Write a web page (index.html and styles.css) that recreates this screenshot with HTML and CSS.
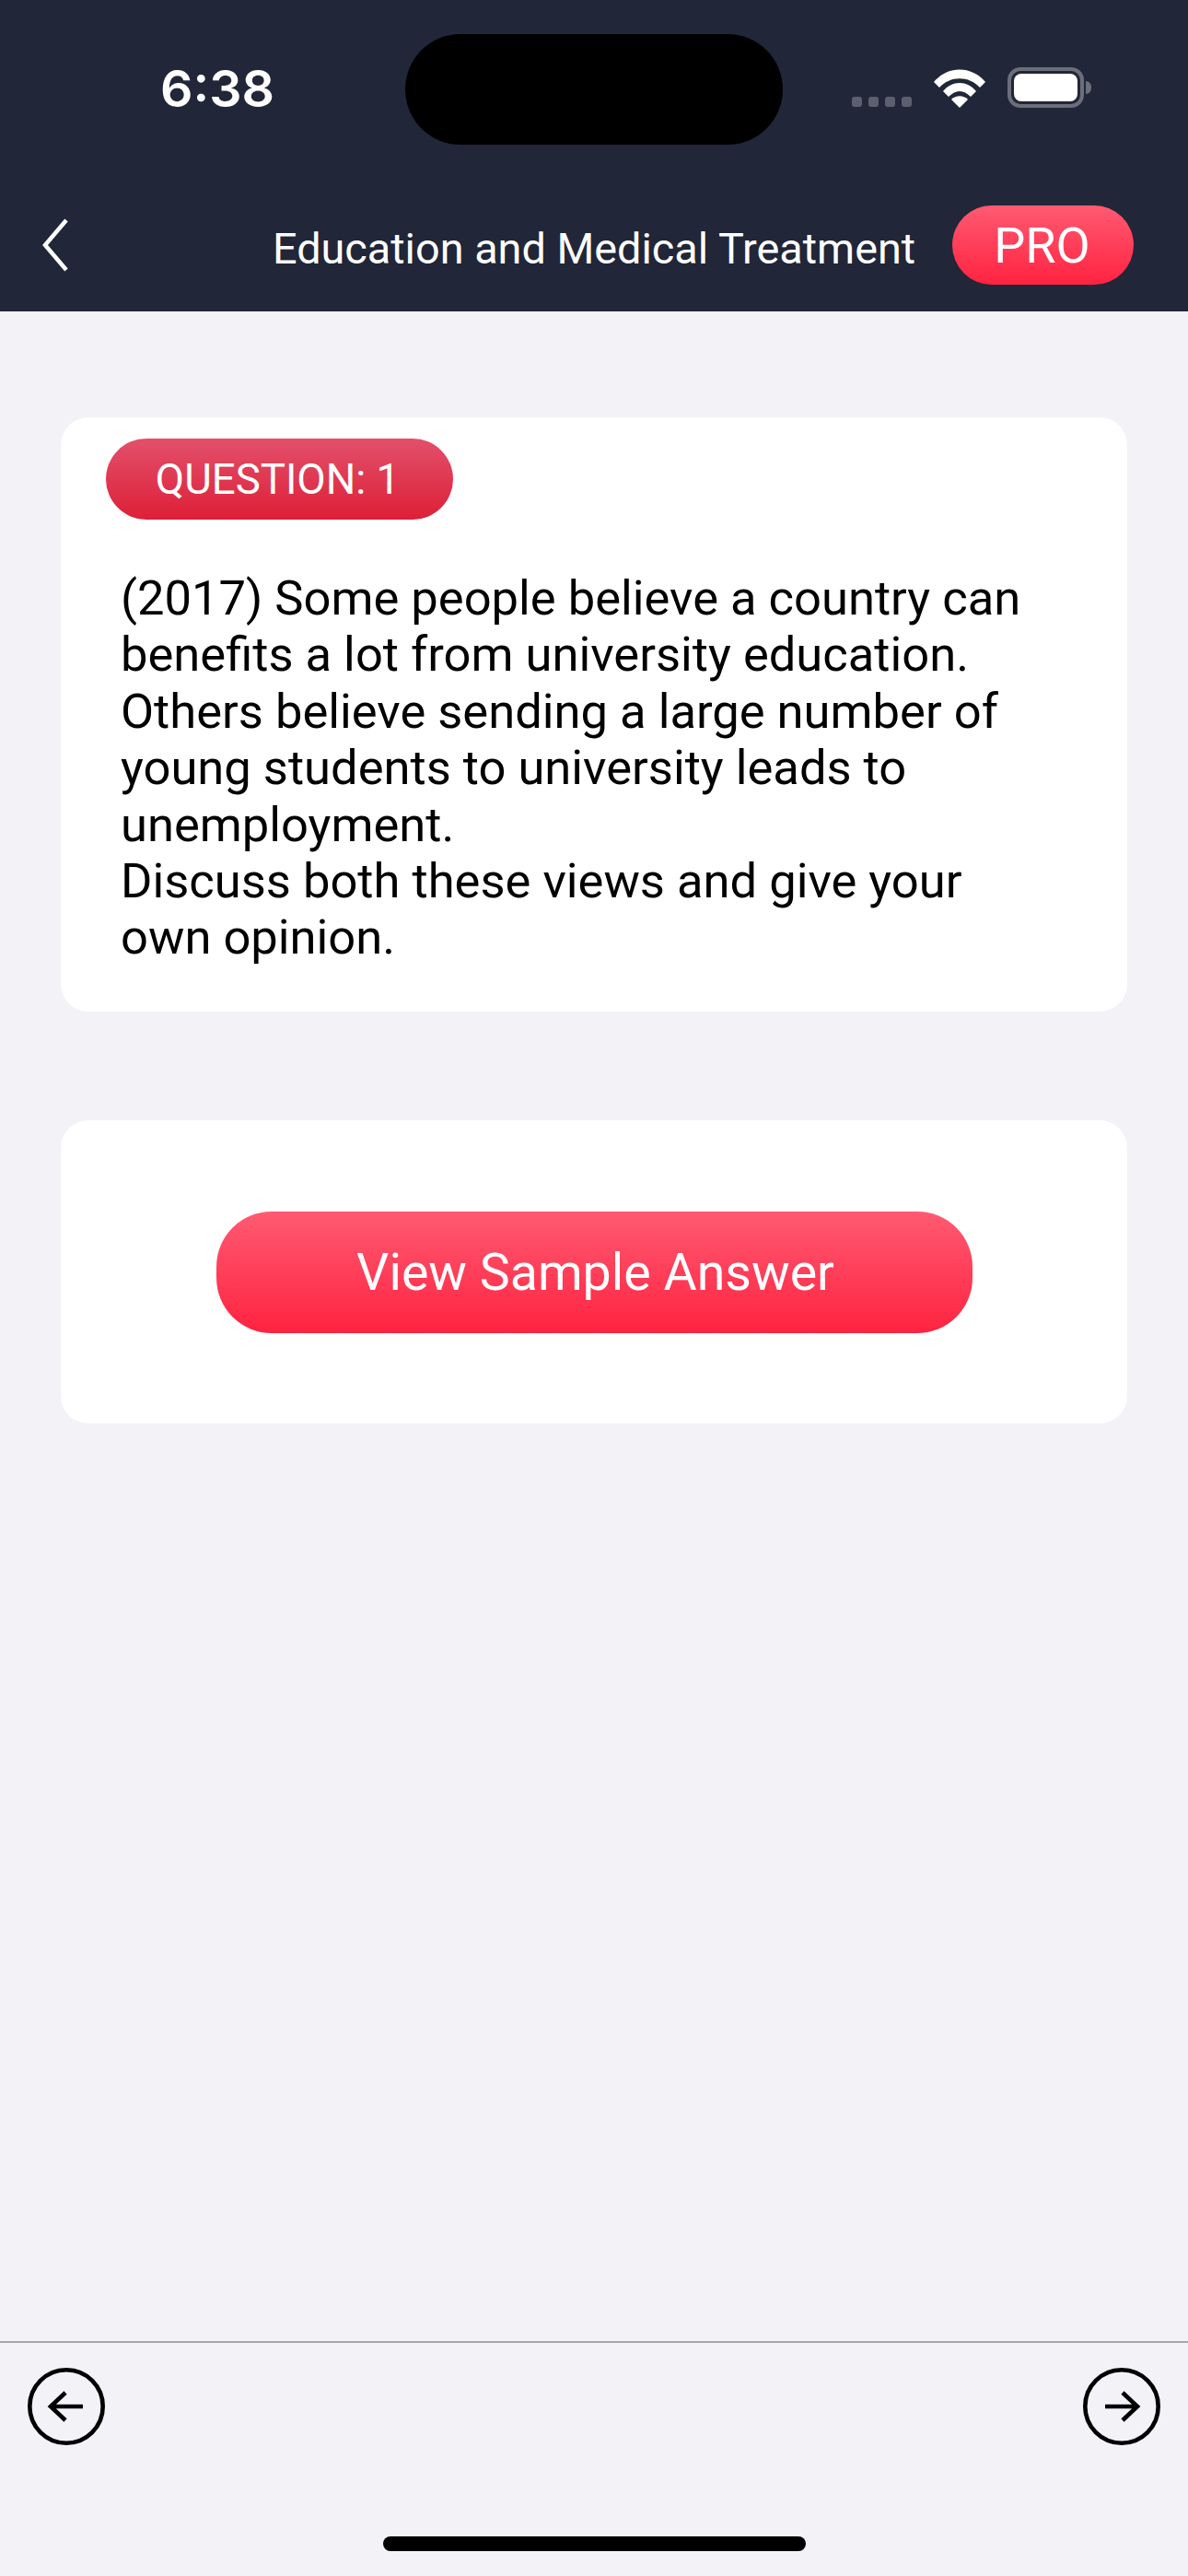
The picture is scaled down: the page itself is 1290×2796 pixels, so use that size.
FILE: index.html

```html
<!DOCTYPE html>
<html>

<head>
    <title>Education and Medical Treatment</title>
    <link rel="stylesheet" href="styles.css">
</head>

<body>
    <header class="top">
        <div class="status">
            <span class="time">6:38</span>
            <div class="island"></div>
            <div class="status-icons">
                <div class="dots"><i></i><i></i><i></i><i></i></div>
                <svg class="wifi" width="56" height="42" viewBox="0 0 56 42">
                    <path d="M0 14 C15 -4 41 -4 56 14 L50 20 C38 7 18 7 6 20 Z" fill="#fff"/>
                    <path d="M10 24 C20 12 36 12 46 24 L40 30 C32 22 24 22 16 30 Z" fill="#fff"/>
                    <path d="M19 33 C24 28 32 28 37 33 L28 42 Z" fill="#fff"/>
                </svg>
                <div class="battery"><div class="battery-fill"></div></div>
                <div class="battery-cap"></div>
            </div>
        </div>
        <nav class="nav">
            <svg class="back" width="30" height="60" viewBox="0 0 30 60">
                <path d="M27 3 L4 30 L27 57" fill="none" stroke="#fff" stroke-width="4.5"/>
            </svg>
            <h1 class="title">Education and Medical Treatment</h1>
            <button class="pro">PRO</button>
        </nav>
    </header>

    <main class="content">
        <section class="card question-card">
            <div class="question-tag">QUESTION: 1</div>
            <p class="question-text">(2017) Some people believe a country can benefits a lot from university education. Others believe sending a large number of young students to university leads to unemployment.<br>Discuss both these views and give your own opinion.</p>
        </section>
        <section class="card answer-card">
            <button class="answer-btn">View Sample Answer</button>
        </section>
    </main>

    <footer class="bottom">
        <div class="arrows">
            <svg width="84" height="84" viewBox="0 0 84 84">
                <circle cx="42" cy="42" r="39.7" fill="none" stroke="#000" stroke-width="4.6"/>
                <path d="M60 42 H25 M41 27 L25 42 L41 57" fill="none" stroke="#000" stroke-width="4.6"/>
            </svg>
            <svg width="84" height="84" viewBox="0 0 84 84">
                <circle cx="42" cy="42" r="39.7" fill="none" stroke="#000" stroke-width="4.6"/>
                <path d="M24 42 H59 M43 27 L59 42 L43 57" fill="none" stroke="#000" stroke-width="4.6"/>
            </svg>
        </div>
        <div class="home-bar"></div>
    </footer>
</body>
</html>
```

FILE: styles.css

```css
body {
    margin: 0;
    width: 1290px;
    height: 2796px;
    display: flex;
    flex-direction: column;
    font-family: Roboto, sans-serif;
    background-color: #f2f2f7;
}

.top {
    height: 338px;
    background-color: #212638;
    box-sizing: border-box;
}

.status {
    height: 223px;
    display: flex;
    align-items: flex-start;
    padding-left: 174px;
    box-sizing: border-box;
}

.time {
    width: 266px;
    margin-top: 65px;
    font-family: Inter, sans-serif;
    font-size: 55.5px;
    line-height: 62px;
    font-weight: 600;
    color: #fff;
}

.island {
    width: 410px;
    height: 120px;
    margin-top: 37px;
    background-color: #000;
    border-radius: 60px;
}

.status-icons {
    display: flex;
    align-items: flex-start;
    margin-top: 73px;
    margin-left: 75px;
}

.dots {
    display: flex;
    gap: 7px;
    margin-top: 32px;
}

.dots i {
    width: 11px;
    height: 11px;
    border-radius: 3px;
    background-color: #5c606e;
}

.wifi {
    margin-left: 24px;
    margin-top: 2px;
}

.battery {
    width: 83px;
    height: 44px;
    margin-left: 24px;
    padding: 3px;
    box-sizing: border-box;
    border: 4px solid #6b6e7b;
    border-radius: 14px;
}

.battery-fill {
    height: 100%;
    background-color: #fff;
    border-radius: 8px;
}

.battery-cap {
    width: 6px;
    height: 14px;
    margin-top: 15px;
    margin-left: 2px;
    background-color: #6b6e7b;
    border-radius: 0 7px 7px 0;
}

.nav {
    height: 115px;
    display: flex;
    align-items: flex-start;
    padding-left: 45px;
}

.back {
    margin-top: 13px;
}

.title {
    width: 697px;
    margin: 20px 0 0 221px;
    font-size: 46.8px;
    line-height: 54px;
    font-weight: 400;
    color: #fff;
    white-space: nowrap;
}

.pro {
    width: 197px;
    height: 86px;
    margin-left: 41px;
    padding: 0 2px 0 0;
    border: none;
    border-radius: 43px;
    font-family: Roboto, sans-serif;
    font-size: 54px;
    color: #fff;
    background: linear-gradient(#ff5a72, #ff2340);
}

.content {
    flex: 1;
    padding: 115px 66px 0;
}

.card {
    background-color: #fff;
    border-radius: 30px;
}

.question-card {
    height: 645px;
    padding: 23px 49px 0;
    box-sizing: border-box;
}

.question-tag {
    width: 377px;
    height: 88px;
    line-height: 90px;
    text-align: center;
    border-radius: 44px;
    font-size: 45.6px;
    color: #fff;
    background: linear-gradient(#e2506a, #de1f38);
    padding-right: 4px;
    box-sizing: border-box;
}

.question-text {
    margin: 55px 0 0 16px;
    width: 1000px;
    font-size: 52.5px;
    line-height: 61.4px;
    color: #000;
}

.answer-card {
    height: 329px;
    margin-top: 118px;
    padding-top: 99px;
    box-sizing: border-box;
    text-align: center;
}

.answer-btn {
    width: 821px;
    height: 132px;
    padding: 0 0 0 3px;
    border: none;
    border-radius: 60px;
    font-family: Roboto, sans-serif;
    font-size: 55.5px;
    color: #fff;
    background: linear-gradient(#ff5a72, #ff2340);
}

.bottom {
    height: 255px;
    box-sizing: border-box;
    border-top: 2px solid #a6a6ab;
}

.arrows {
    display: flex;
    justify-content: space-between;
    padding: 27px 30px 0;
    height: 210px;
    box-sizing: border-box;
}

.home-bar {
    width: 459px;
    height: 16px;
    margin: 0 auto;
    background-color: #000;
    border-radius: 8px;
}
```
